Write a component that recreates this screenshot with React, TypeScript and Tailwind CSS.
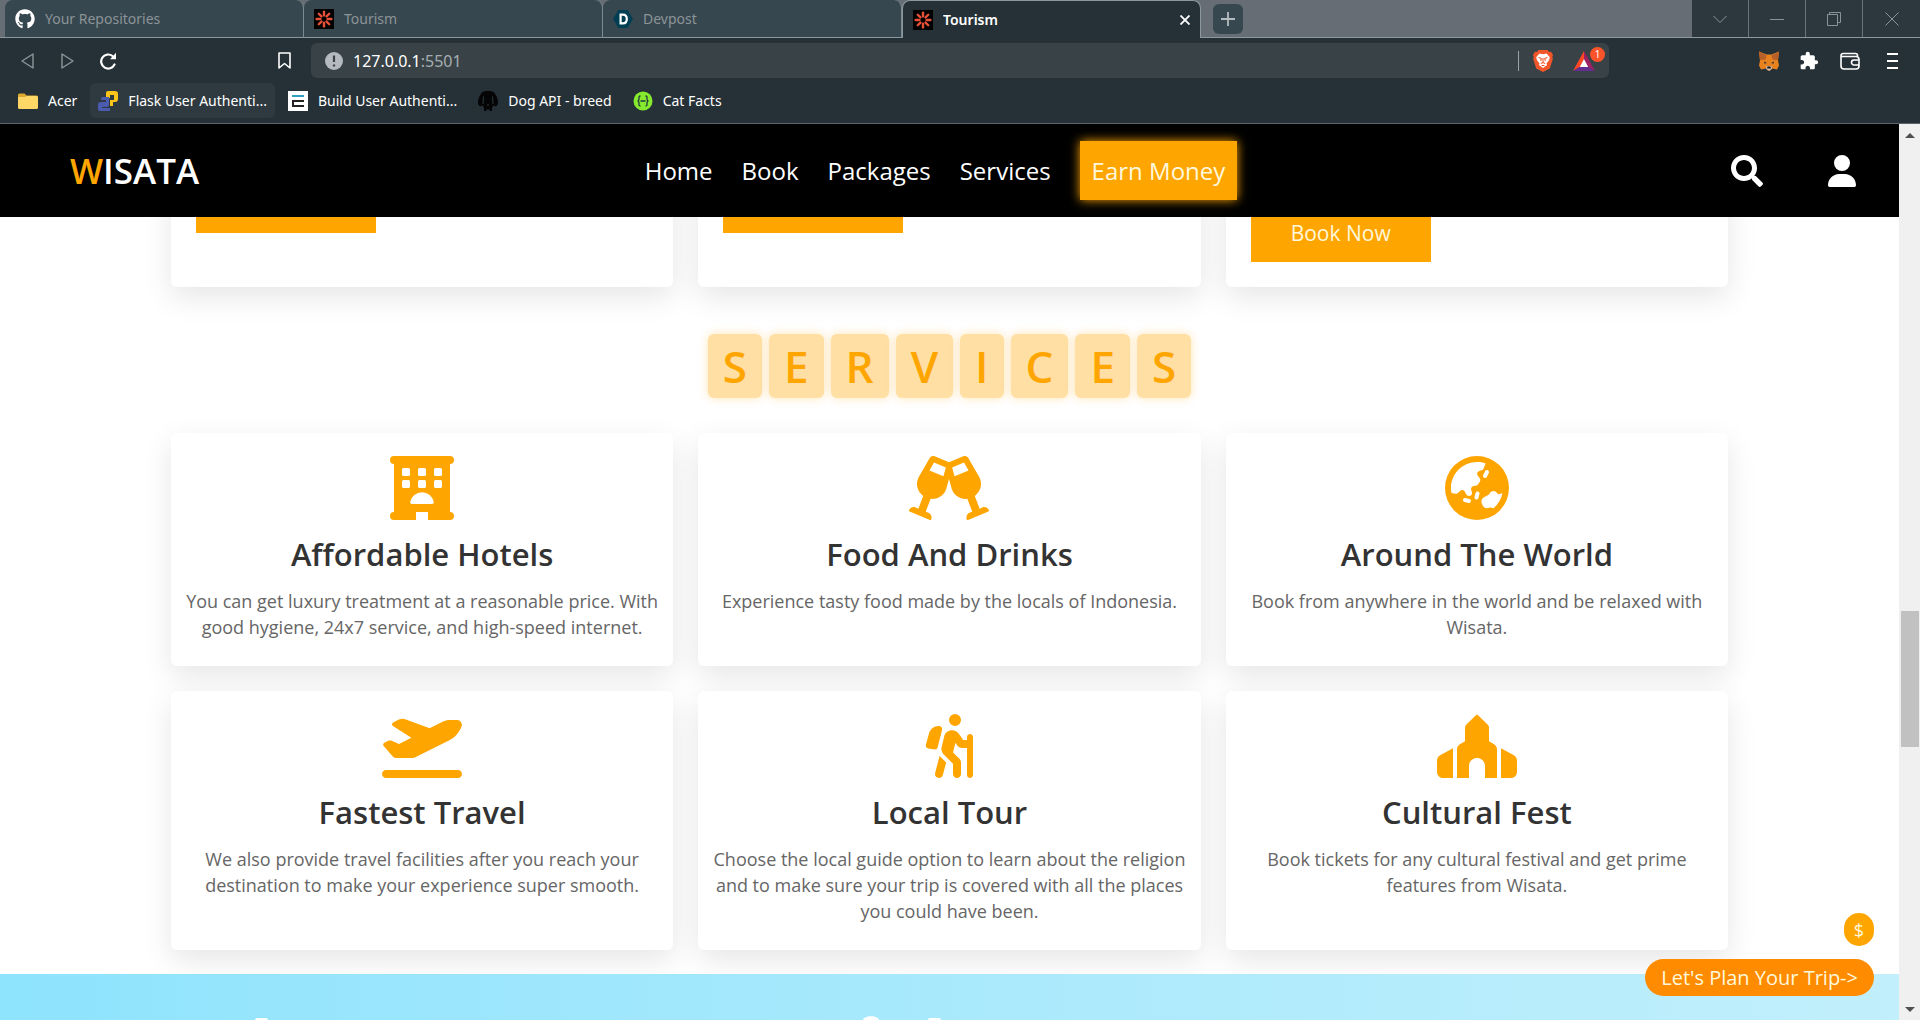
import type { ReactNode } from 'react';
import type { IconType } from 'react-icons';
import {
    FaEarthAsia,
    FaGithub,
    FaPersonHiking,
    FaPlaceOfWorship,
    FaPlaneDeparture,
    FaUser
} from 'react-icons/fa6';
import { FaGlassCheers, FaSearch } from 'react-icons/fa';
import { MdExtension } from 'react-icons/md';
import clsx from 'clsx';

const LETTERS = ['S', 'E', 'R', 'V', 'I', 'C', 'E', 'S'];

function HotelIcon({ className }: { className?: string }) {
    return (
        <svg viewBox="0 0 64 64" className={className} fill="currentColor">
            <path
                fillRule="evenodd"
                d="M4 0h56a4 4 0 0 1 0 8v48a4 4 0 0 1 0 8H38v-8H26v8H4a4 4 0 0 1 0-8V8a4 4 0 0 1 0-8zM13.500 12a1.500 1.500 0 0 0-1.500 1.500v5a1.500 1.500 0 0 0 1.500 1.500h5a1.500 1.500 0 0 0 1.500-1.500v-5a1.500 1.500 0 0 0-1.500-1.500zM29.500 12a1.500 1.500 0 0 0-1.500 1.500v5a1.500 1.500 0 0 0 1.500 1.500h5a1.500 1.500 0 0 0 1.500-1.500v-5a1.500 1.500 0 0 0-1.500-1.500zM45.500 12a1.500 1.500 0 0 0-1.500 1.500v5a1.500 1.500 0 0 0 1.500 1.500h5a1.500 1.500 0 0 0 1.500-1.500v-5a1.500 1.500 0 0 0-1.500-1.500zM13.500 24a1.500 1.500 0 0 0-1.500 1.500v5a1.500 1.500 0 0 0 1.500 1.500h5a1.500 1.500 0 0 0 1.500-1.500v-5a1.500 1.500 0 0 0-1.500-1.500zM29.500 24a1.500 1.500 0 0 0-1.500 1.500v5a1.500 1.500 0 0 0 1.500 1.500h5a1.500 1.500 0 0 0 1.500-1.500v-5a1.500 1.500 0 0 0-1.500-1.500zM45.500 24a1.500 1.500 0 0 0-1.500 1.500v5a1.500 1.500 0 0 0 1.500 1.500h5a1.500 1.500 0 0 0 1.500-1.500v-5a1.500 1.500 0 0 0-1.500-1.500zM22 48h20c1.200 0 2-.8 1.800-2A12 12 0 0 0 20.200 46c-.2 1.200.6 2 1.800 2z"
            />
        </svg>
    );
}

const SERVICES: { icon: IconType; title: string; text: string }[] = [
    { icon: HotelIcon, title: 'Affordable Hotels', text: 'You can get luxury treatment at a reasonable price. With good hygiene, 24x7 service, and high-speed internet.' },
    { icon: FaGlassCheers, title: 'Food And Drinks', text: 'Experience tasty food made by the locals of Indonesia.' },
    { icon: FaEarthAsia, title: 'Around The World', text: 'Book from anywhere in the world and be relaxed with Wisata.' },
    { icon: FaPlaneDeparture, title: 'Fastest Travel', text: 'We also provide travel facilities after you reach your destination to make your experience super smooth.' },
    { icon: FaPersonHiking, title: 'Local Tour', text: 'Choose the local guide option to learn about the religion and to make sure your trip is covered with all the places you could have been.' },
    { icon: FaPlaceOfWorship, title: 'Cultural Fest', text: 'Book tickets for any cultural festival and get prime features from Wisata.' }
];

function TourismIcon() {
    return (
        <svg viewBox="0 0 20 20" className="h-5 w-5 shrink-0">
            <rect width="20" height="20" fill="#000" />
            <g stroke="#e8503a" strokeWidth="2.4" strokeLinecap="round">
                {[0, 45, 90, 135, 180, 225, 270, 315].map(a => (
                    <path key={a} d="M10 6.4V2.6" transform={`rotate(${a} 10 10)`} />
                ))}
            </g>
        </svg>
    );
}

function DevpostIcon() {
    return (
        <svg viewBox="0 0 20 20" className="h-5 w-5 shrink-0">
            <path d="M5.4 1h9.2L20 10l-5.4 9H5.4L0 10z" fill="#003e54" />
            <path d="M7.6 5.6h2.2c2.8 0 4 1.900 4 4.400s-1.300 4.400-4 4.400H7.600z" fill="none" stroke="#fff" strokeWidth="2.2" />
        </svg>
    );
}

function FolderIcon() {
    return (
        <svg viewBox="0 0 20 20" className="h-5 w-5 shrink-0">
            <path d="M0 4a1.500 1.500 0 0 1 1.500-1.500h5l2 2h10A1.500 1.500 0 0 1 20 6v11H0z" fill="#e0a92e" />
            <path d="M0 6h7l2-1h9.500A1.500 1.500 0 0 1 20 6.500v10a1.500 1.500 0 0 1-1.500 1.500h-17A1.500 1.500 0 0 1 0 16.500z" fill="#ffd766" />
        </svg>
    );
}

function PythonIcon() {
    return (
        <svg viewBox="0 0 20 20" className="h-5 w-5 shrink-0">
            <path d="M10 0h7a3 3 0 0 1 3 3v5a3 3 0 0 1-3 3h-2v4h-3V9h4V4h-4v3H8V2a2 2 0 0 1 2-2z" fill="#fcc419" />
            <path d="M5 6h6v8a2 2 0 0 1-2 2H4v1h8v3H2a2 2 0 0 1-2-2v-4a3 3 0 0 1 3-3h5V9H3V8a2 2 0 0 1 2-2z" fill="#4a5bb0" />
        </svg>
    );
}

function BuildIcon() {
    return (
        <svg viewBox="0 0 20 20" className="h-5 w-5 shrink-0">
            <rect width="20" height="20" fill="#fff" />
            <path d="M4 5h12" stroke="#2f9fc4" strokeWidth="2" />
            <path d="M16 10H5v5h11" fill="none" stroke="#222" strokeWidth="2" />
        </svg>
    );
}

function DogIcon() {
    return (
        <svg viewBox="0 0 20 20" className="h-5 w-5 shrink-0">
            <path d="M10 0C7 0 5 .6 3.500 2 1 5 0 9 0 12c0 3 3 4.500 4.400 2L6 17v3h2.500v-1.500h3V20H14v-3l1.600-3c1.400 2.500 4.400 1 4.400-2 0-3-1-7-3.500-10C15 .6 13 0 10 0z" fill="#050505" />
            <path d="M5.500 5.500L5 13M14.500 5.500L15 13M9 14h2" stroke="#39454b" strokeWidth=".8" />
        </svg>
    );
}

function CatIcon() {
    return (
        <svg viewBox="0 0 20 20" className="h-5 w-5 shrink-0">
            <circle cx="10" cy="10" r="9.500" fill="#85ea2d" />
            <path d="M7.500 5C5.500 5 6 6.500 6 8c0 1.200-.5 2-1.500 2 1 0 1.500.8 1.500 2 0 1.500-.5 3 1.500 3M12.500 5c2 0 1.500 1.500 1.500 3 0 1.200.5 2 1.500 2-1 0-1.500.8-1.500 2 0 1.500.5 3-1.500 3M7.500 10h5" fill="none" stroke="#24383f" strokeWidth="1.300" />
        </svg>
    );
}

function BraveIcon() {
    return (
        <svg viewBox="0 0 20 22" className="h-[22px] w-5">
            <path d="M5.500 0h9l1.800 2 1.700-.2L20 5l-.7 2 .5 2-3 9.500L10 22l-6.800-3.500L.2 9l.5-2L0 5l2-3.200 1.700.2z" fill="#f1562b" />
            <path d="M10 4.200l3.500-.7 3.300 3.800-.8 2.900-2.500 3.200.6 1.600L10 18l-4.100-3 .6-1.600L4 10.200l-.8-2.900 3.300-3.800z" fill="#fff" />
            <path d="M5.500 7.500l2.700.8-.4 2.600M14.500 7.500l-2.700.8.4 2.600M10 8v4.500M7.800 13.500l2.200-1 2.200 1M8.500 15.500h3" fill="none" stroke="#f1562b" strokeWidth="1.100" />
        </svg>
    );
}

function RewardsIcon() {
    return (
        <svg viewBox="0 0 22 20" className="h-5 w-[22px]">
            <path d="M11 0L0 20l7.500-4.500L11 8z" fill="#ff4724" />
            <path d="M11 0l11 20-7.500-4.500L11 8z" fill="#9e1f63" />
            <path d="M0 20h22l-7.500-4.500h-7z" fill="#662d91" />
            <path d="M11 8l4.200 8H6.800z" fill="#fff" />
        </svg>
    );
}

function FoxIcon() {
    return (
        <svg viewBox="0 0 20 19" className="h-5 w-5">
            <path d="M0 0l7.500 3h5L20 0l-1 9 1 5-2 4-5-1-2 2H9l-2-2-5 1-2-4 1-5z" fill="#e8821e" />
            <path d="M0 0l7.500 4-1 4L1 8.500zM20 0l-7.500 4 1 4 5.500.5z" fill="#b8602a" />
            <path d="M5 10l3 1.500-2.500.7zM15 10l-3 1.500 2.500.7z" fill="#2b3338" />
            <path d="M7.500 14.500h5L13 17l-2 2H9l-2-2z" fill="#d7c1b3" />
            <path d="M8.500 15h3l.5 2H8z" fill="#161616" />
        </svg>
    );
}

function Tab({ icon, label, active }: { icon: ReactNode; label: string; active?: boolean }) {
    return (
        <div
            className={clsx(
                'flex h-full w-[299px] min-w-0 items-center gap-2.5 rounded-t-lg px-2.5 text-sm',
                active
                    ? 'border border-b-0 border-[#8b989d] bg-[#263137] font-semibold text-white'
                    : 'border-r border-b border-r-[#7d8a90] border-b-[#8b989d] bg-[#37474f] text-[#8b9498]'
            )}
        >
            {icon}
            <span className="flex-1 truncate">{label}</span>
            {active && (
                <button aria-label="Close tab">
                    <svg viewBox="0 0 10 10" className="h-2.5 w-2.5" stroke="#fff" strokeWidth="1.800">
                        <path d="M.5.5l9 9M9.500.5l-9 9" />
                    </svg>
                </button>
            )}
        </div>
    );
}

function WindowButton({ label, children }: { label: string; children: ReactNode }) {
    return (
        <button aria-label={label} className="flex h-full w-[57px] items-center justify-center border-r border-[#68757b] bg-[#2d383e] last:border-r-0">
            <svg viewBox="0 0 14 14" className="h-3.5 w-3.5" fill="none" stroke="#87949a" strokeWidth="1">
                {children}
            </svg>
        </button>
    );
}

function Bookmark({ icon, label, hovered }: { icon: ReactNode; label: string; hovered?: boolean }) {
    return (
        <a href="#" className={clsx('flex h-[35px] items-center gap-2.5 rounded-md px-2 text-sm text-white', hovered && 'bg-[#2f3a40]')}>
            {icon}
            {label}
        </a>
    );
}

function BrowserChrome() {
    return (
        <div className="shrink-0 border-b border-[#5c6468] bg-[#263137] font-['Noto_Sans','Open_Sans',sans-serif]">
            <div className="flex h-[38px] bg-[#666d74]">
                <div className="w-[5px] border-b border-[#8b989d]" />
                <Tab icon={<FaGithub className="h-5 w-5 shrink-0 text-white" />} label="Your Repositories" />
                <Tab icon={<TourismIcon />} label="Tourism" />
                <Tab icon={<DevpostIcon />} label="Devpost" />
                <Tab icon={<TourismIcon />} label="Tourism" active />
                <div className="flex flex-1 items-center border-b border-[#8b989d] pl-3">
                    <button aria-label="New tab" className="flex h-[30px] w-[30px] items-center justify-center rounded-md bg-[#37474f]">
                        <svg viewBox="0 0 14 14" className="h-3.5 w-3.5" stroke="#b4bcbf" strokeWidth="1.800">
                            <path d="M7 0v14M0 7h14" />
                        </svg>
                    </button>
                </div>
                <div className="flex border-b border-[#8b989d]">
                    <WindowButton label="Search tabs"><path d="M.5 4l6.500 6.500L13.500 4" /></WindowButton>
                    <WindowButton label="Minimize"><path d="M0 7.500h14" /></WindowButton>
                    <WindowButton label="Restore"><path d="M.5 2.500h10v11H.5zM2.500 2.500v-2h11v10h-3" /></WindowButton>
                    <WindowButton label="Close"><path d="M.5.5l13 13M13.500.5l-13 13" /></WindowButton>
                </div>
            </div>

            <div className="flex h-[45px] items-center pr-[22px]">
                <div className="flex w-[311px] items-center pl-[21px] pr-5">
                    <button aria-label="Back">
                        <svg viewBox="0 0 13 16" className="h-4 w-[13px]" fill="none" stroke="#8b969b" strokeWidth="1.400"><path d="M12 1v14L1 8z" strokeLinejoin="round" /></svg>
                    </button>
                    <button aria-label="Forward" className="ml-[27px]">
                        <svg viewBox="0 0 13 16" className="h-4 w-[13px]" fill="none" stroke="#8b969b" strokeWidth="1.400"><path d="M1 1v14l11-7z" strokeLinejoin="round" /></svg>
                    </button>
                    <button aria-label="Reload" className="ml-[25px]">
                        <svg viewBox="0 0 18 18" className="h-[18px] w-[18px]">
                            <path d="M15.500 12.500A7 7 0 1 1 13.500 4" fill="none" stroke="#fff" strokeWidth="2.200" strokeLinecap="round" />
                            <path d="M17 .8v6.400h-6z" fill="#fff" />
                        </svg>
                    </button>
                    <button aria-label="Bookmark this page" className="ml-auto">
                        <svg viewBox="0 0 13 17" className="h-[17px] w-[13px]" fill="none" stroke="#fff" strokeWidth="1.600"><path d="M1 1h11v15l-5.500-4.500L1 16z" strokeLinejoin="round" /></svg>
                    </button>
                </div>
                <div className="flex h-[35px] w-[1298px] shrink items-center rounded-md bg-[#394347] pl-3.5 pr-1">
                    <svg viewBox="0 0 18 18" className="h-[18px] w-[18px] shrink-0">
                        <circle cx="9" cy="9" r="9" fill="#b4babd" />
                        <path d="M9 3.500V10M9 12.500v2" stroke="#394347" strokeWidth="2.200" />
                    </svg>
                    <span className="ml-2.5 text-base text-white">127.0.0.1<span className="text-[#a5adb1]">:5501</span></span>
                    <div className="ml-auto flex items-center">
                        <div className="h-5 w-px bg-[#9aa3a7]" />
                        <button aria-label="Brave Shields" className="ml-3.5"><BraveIcon /></button>
                        <button aria-label="Rewards" className="relative ml-5 pr-2.5">
                            <RewardsIcon />
                            <span className="absolute -top-1 right-0 flex h-[15px] w-[15px] items-center justify-center rounded-full bg-[#fb542b] text-[10px] text-white">1</span>
                        </button>
                    </div>
                </div>
                <div className="ml-auto flex items-center">
                    <button aria-label="Wallet extension"><FoxIcon /></button>
                    <button aria-label="Extensions" className="ml-5 text-white"><MdExtension className="h-5 w-5" /></button>
                    <button aria-label="Brave Wallet" className="ml-[21px]">
                        <svg viewBox="0 0 20 18" className="h-[18px] w-5" fill="none" stroke="#fff" strokeWidth="1.600">
                            <path d="M17.500 5V3.500a2 2 0 0 0-2-2H3a2 2 0 0 0-2 2V14a3 3 0 0 0 3 3h12a3 3 0 0 0 3-3V7.500a3 3 0 0 0-3-3H1.500" />
                            <path d="M19 8h-5a2.500 2.500 0 0 0 0 5h5" />
                        </svg>
                    </button>
                    <button aria-label="Menu" className="ml-[27px]">
                        <svg viewBox="0 0 11 16" className="h-4 w-[11px]" stroke="#fff" strokeWidth="1.800"><path d="M0 1h11M0 8h11M0 15h11" /></svg>
                    </button>
                </div>
            </div>

            <div className="flex h-10 items-start gap-[5px] pl-2.5">
                <Bookmark icon={<FolderIcon />} label="Acer" />
                <Bookmark icon={<PythonIcon />} label="Flask User Authenti..." hovered />
                <Bookmark icon={<BuildIcon />} label="Build User Authenti..." />
                <Bookmark icon={<DogIcon />} label="Dog API - breed" />
                <Bookmark icon={<CatIcon />} label="Cat Facts" />
            </div>
        </div>
    );
}

function SiteHeader() {
    return (
        <header className="relative z-10 flex h-[93px] items-center bg-black text-white">
            <div className="flex-1 pl-[70px]">
                <a href="#" className="text-[35px] font-semibold leading-10"><span className="text-[#ffa500]">W</span>ISATA</a>
            </div>
            <nav className="mr-11 flex items-center gap-[29px] text-2xl">
                <a href="#">Home</a>
                <a href="#">Book</a>
                <a href="#">Packages</a>
                <a href="#">Services</a>
                <a href="#" className="flex h-[59px] items-center bg-[#ffa500] px-3 text-[#fff8dc] shadow-[0_0_10px_#ffa500]">Earn Money</a>
            </nav>
            <div className="flex flex-1 items-center justify-end gap-[65px] pr-[43px]">
                <button aria-label="Search"><FaSearch className="h-8 w-8" /></button>
                <button aria-label="Account"><FaUser className="h-8 w-7" /></button>
            </div>
        </header>
    );
}

// last strip of the package cards, the rest is scrolled under the header
function Packages() {
    return (
        <section className="-mt-10 grid grid-cols-3 gap-[25px] px-[9%]">
            {['', '', 'mt-[29px]'].map((offset, i) => (
                <div key={i} className="rounded-b-md bg-white px-[25px] pb-[25px] shadow-[0_10px_30px_rgba(0,0,0,0.1)]">
                    <button className={clsx('h-14 w-[180px] bg-[#ffa500] text-[21px] text-[#fff8dc]', offset)}>Book Now</button>
                </div>
            ))}
        </section>
    );
}

function Services() {
    return (
        <section className="px-[9%] pb-6 pt-[47px]">
            <h1 className="flex justify-center gap-[7px] pb-[35px] text-[44px] font-semibold leading-[64px] text-[#ffa500]">
                {LETTERS.map((letter, i) => (
                    <span key={i} className="rounded-md bg-[#ffdfa3] px-[15px] shadow-[0_0_10px_rgba(255,165,0,0.3)]">{letter}</span>
                ))}
            </h1>
            <div className="grid grid-cols-3 gap-[25px]">
                {SERVICES.map(({ icon: Icon, title, text }) => (
                    <article key={title} className="rounded-md bg-white px-3 pb-[26px] pt-[23px] text-center shadow-[0_10px_30px_rgba(0,0,0,0.1)]">
                        <Icon className="mx-auto h-16 w-20 text-[#ffa500]" />
                        <h3 className="my-3.5 text-[31px] font-semibold leading-10 text-[#333]">{title}</h3>
                        <p className="text-lg leading-[26px] text-[#666]">{text}</p>
                    </article>
                ))}
            </div>
        </section>
    );
}

function Scrollbar() {
    return (
        <div className="flex w-[21px] shrink-0 flex-col items-center bg-[#f0f0f0]" aria-hidden="true">
            <svg viewBox="0 0 10 5" className="mt-[9px] h-[5px] w-2.5" fill="#505050"><path d="M0 5l5-5 5 5z" /></svg>
            <div className="grow-[473]" />
            <div className="h-[136px] w-[18px] bg-[#c1c1c1]" />
            <div className="grow-[260]" />
            <svg viewBox="0 0 10 5" className="mb-2 h-[5px] w-2.5" fill="#505050"><path d="M0 0h10L5 5z" /></svg>
        </div>
    );
}

export default function App() {
    return (
        <div className="flex h-screen flex-col overflow-hidden bg-white">
            <BrowserChrome />
            <div className="flex min-h-0 flex-1">
                <main className="relative flex min-w-0 flex-1 flex-col overflow-hidden font-['Open_Sans','Noto_Sans',sans-serif]">
                    <SiteHeader />
                    <Packages />
                    <Services />
                    <section className="relative z-10 flex flex-1 items-end bg-linear-to-r from-[#8ee3fd] to-[#c1effb]">
                        <svg viewBox="0 0 690 4" className="ml-[255px] h-1 w-[690px]" fill="#fff">
                            <path d="M0 4a2 2 0 0 1 2-2h9a2 2 0 0 1 2 2zM608 4c1-5 15-5 16 0zM673 4a2 2 0 0 1 2-2h9a2 2 0 0 1 2 2z" />
                        </svg>
                    </section>
                    <div className="absolute bottom-6 right-[25px] z-20 flex flex-col items-end gap-[13px] text-[#fff8dc]">
                        <button className="h-[33px] w-[30px] rounded-full bg-[#ffa500] text-lg">$</button>
                        <button className="h-[37px] rounded-full bg-[#ff8c00] px-4 text-xl">Let's Plan Your Trip-&gt;</button>
                    </div>
                </main>
                <Scrollbar />
            </div>
        </div>
    );
}
